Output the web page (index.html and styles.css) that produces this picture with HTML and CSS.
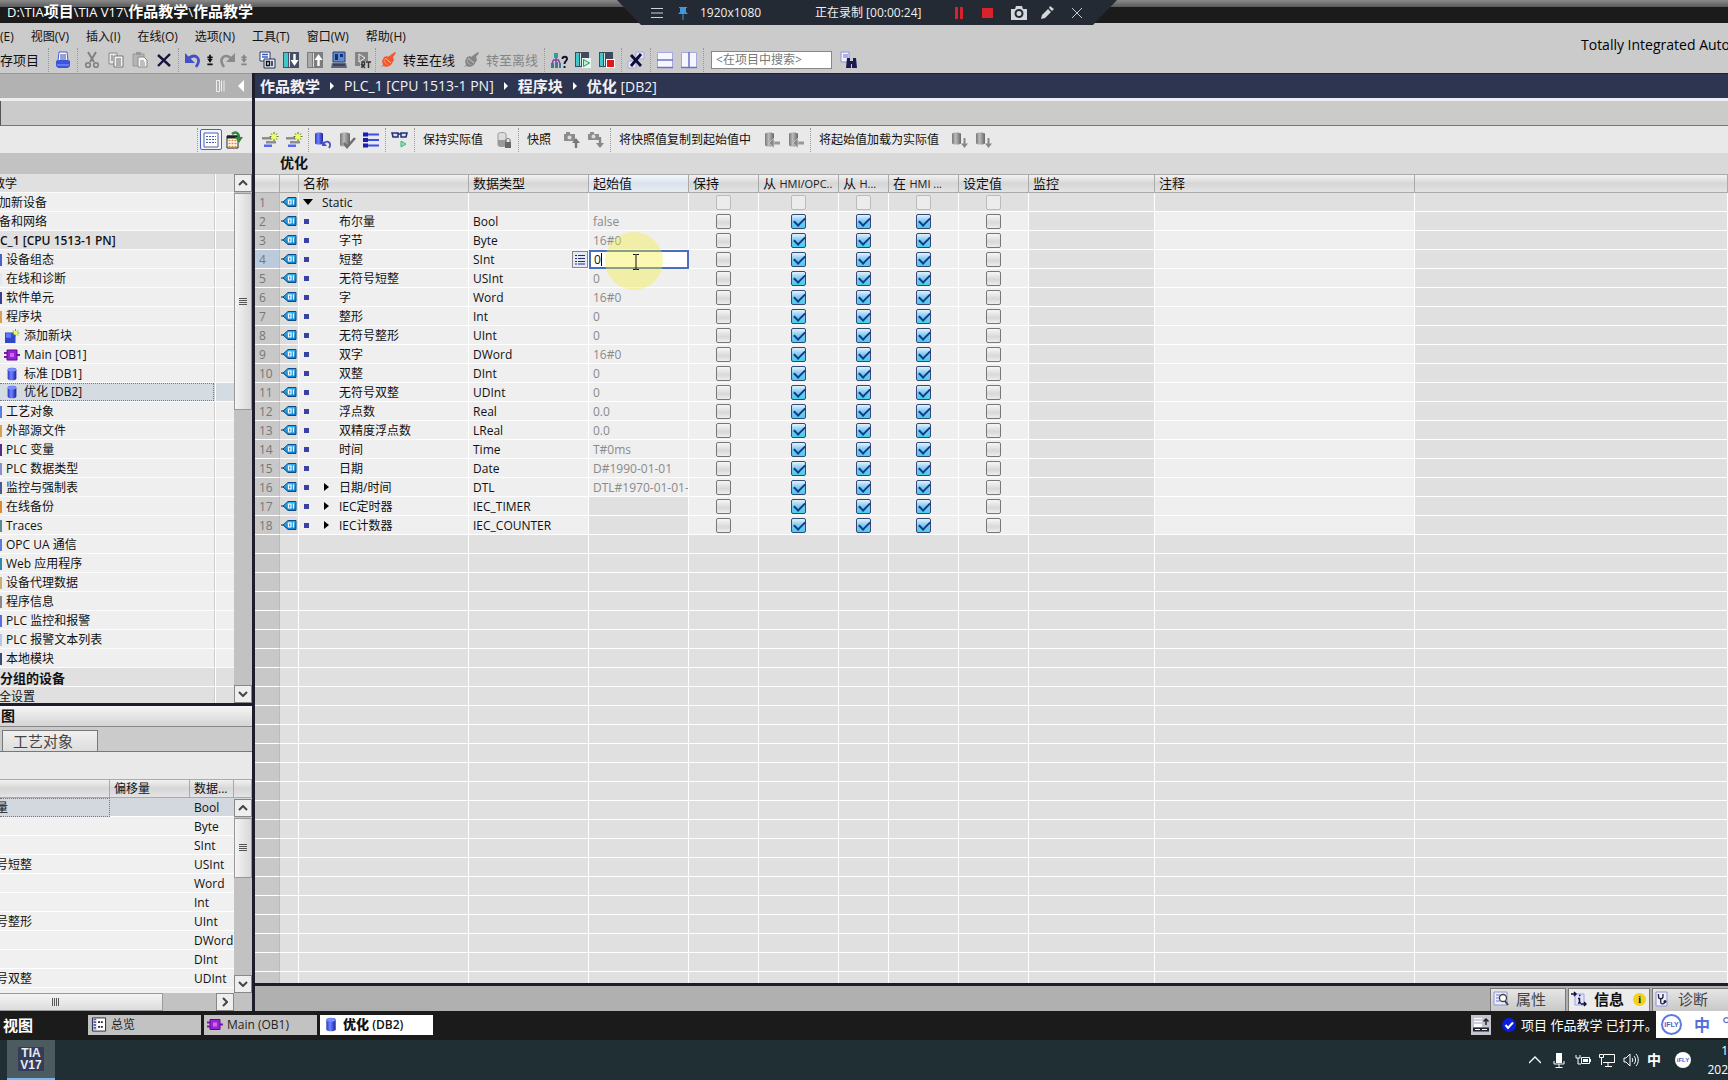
FILE: index.html
```
<!DOCTYPE html>
<html lang="zh-CN">
<head>
<meta charset="utf-8">
<title>TIA V17 - 作品教学</title>
<link rel="stylesheet" href="styles.css">
</head>
<body>
<svg class="sprite" aria-hidden="true">
  <defs>
    <linearGradient id="gBlue" x1="0" x2="1"><stop offset="0" stop-color="#2a35c8"/><stop offset=".4" stop-color="#6f86ff"/><stop offset="1" stop-color="#1a1f9a"/></linearGradient>
    <linearGradient id="gGrey" x1="0" x2="1"><stop offset="0" stop-color="#777"/><stop offset=".4" stop-color="#bbb"/><stop offset="1" stop-color="#666"/></linearGradient>
    <linearGradient id="gTag" x1="0" x2="0" y1="0" y2="1"><stop offset="0" stop-color="#35b4ee"/><stop offset="1" stop-color="#0a7fd0"/></linearGradient>
  </defs>
  <symbol id="print" viewBox="0 0 18 18"><path d="M5 1h8l1 9H4z" fill="#fff" stroke="#4a5ad0"/><path d="M6 4h6M6 6h6M6 8h6" stroke="#33409c"/><path d="M2 10l2-1h10l2 1v5l-2 2H4l-2-2z" fill="#3c55dd"/><path d="M3 14h12" stroke="#8fa4ff"/></symbol>
  <symbol id="cut" viewBox="0 0 18 18"><path d="M5 1l6 10M13 1L7 11" stroke="#808080" stroke-width="2" fill="none"/><circle cx="5" cy="14" r="2.3" fill="none" stroke="#808080" stroke-width="1.6"/><circle cx="13" cy="14" r="2.3" fill="none" stroke="#808080" stroke-width="1.6"/></symbol>
  <symbol id="copy" viewBox="0 0 18 18"><path d="M2 2h8v11H2z" fill="#e8e8e8" stroke="#888"/><path d="M7 5h9v11H7z" fill="#f4f4f4" stroke="#777"/><path d="M4 5h2M4 7h2M4 9h2M9 8h5M9 10h5M9 12h5M9 14h5" stroke="#666"/></symbol>
  <symbol id="paste" viewBox="0 0 18 18"><path d="M2 3h11v12H2z" fill="#b5b5b5" stroke="#999"/><path d="M5 1h5v3H5z" fill="#999"/><path d="M7 6h6l3 3v7H7z" fill="#f4f4f4" stroke="#888"/><path d="M9 10h4M9 12h5M9 14h5" stroke="#888"/></symbol>
  <symbol id="del" viewBox="0 0 18 18"><path d="M3 4l12 11M15 3L3 15" stroke="#14143c" stroke-width="2.4" fill="none"/></symbol>
  <symbol id="undo" viewBox="0 0 18 18"><path d="M5 7c7-5 13 1 7 9" stroke="#4450c8" stroke-width="2.8" fill="none"/><path d="M1 2v10h10z" fill="#4450c8"/></symbol>
  <symbol id="redo" viewBox="0 0 18 18"><path d="M13 7C6 2 0 8 6 16" stroke="#8a8a8a" stroke-width="2.6" fill="none"/><path d="M17 2v9H8z" fill="#8a8a8a"/></symbol>
  <symbol id="pm" viewBox="0 0 8 18"><path d="M1 6h6M4 3v8M1 14h6" stroke="currentColor" stroke-width="2"/><path d="M1 8h6l-3 4z" fill="currentColor"/></symbol>
  <symbol id="compile" viewBox="0 0 18 18"><path d="M2 1h10v9H2z" fill="#fff" stroke="#2a3a70"/><path d="M4 3.500h6M4 6h6" stroke="#3b56c8" stroke-width="1.500"/><path d="M6 8h11v9H6z" fill="#dfe6f5" stroke="#26305e"/><path d="M8.500 10.500h3v4h-3zM14 10v5" stroke="#111" fill="none" stroke-width="1.400"/></symbol>
  <symbol id="down" viewBox="0 0 18 18"><path d="M1 1h16v16H1z" fill="#455065"/><path d="M2 2h4v14H2z" fill="#3fc7c9"/><path d="M7 2h1v14H7z" fill="#ddd"/><path d="M12.500 3v8" stroke="#fff" stroke-width="2.400"/><path d="M8.500 9h8l-4 6z" fill="#fff"/></symbol>
  <symbol id="up" viewBox="0 0 18 18"><path d="M1 1h16v16H1z" fill="#7c7c7c"/><path d="M2 2h4v14H2z" fill="#aaa"/><path d="M7 2h1v14H7z" fill="#ddd"/><path d="M12.500 8v7" stroke="#fff" stroke-width="2.400"/><path d="M8.500 9h8l-4-6z" fill="#fff"/></symbol>
  <symbol id="sim" viewBox="0 0 18 18"><path d="M3 1h12v10H3z" fill="#5a8fd8" stroke="#2c3a6a"/><path d="M5 3h3v6H5zM10 3h3v3h-3z" fill="#1d2c70"/><path d="M2 12h14l1 5H1z" fill="#5b6480"/><path d="M3 14h12" stroke="#222"/></symbol>
  <symbol id="rt" viewBox="0 0 18 18"><path d="M1 1h13v14H1z" fill="#858585"/><path d="M5 3v8l6-4z" fill="none" stroke="#eee"/><path d="M6 10h12v8H6z" fill="#c4c4c4"/><path d="M8 17v-6h2.500v3H8l3 3M12 11h5M14.500 11v6" stroke="#333" stroke-width="1.400" fill="none"/></symbol>
  <symbol id="plug" viewBox="0 0 18 18"><path d="M1 17l3-3-1-4 2-4 3-1 1 1 4-3 3-2 1 1-3 4 1 3-3 5-4 2-4-1z" fill="currentColor"/><path d="M6 7l6 5" stroke="#fff" stroke-opacity=".6"/><path d="M5 8l1 4 3 2" stroke="#fff" stroke-opacity=".3" fill="none"/></symbol>
  <symbol id="net" viewBox="0 0 18 18"><path d="M4 2h4v5H4z" fill="#2e9f9a"/><path d="M6 7v4M1.500 14l2-5h5l2 5" stroke="#8b3fa0" stroke-width="1.500" fill="none"/><path d="M1 12h3v5H1zM5 11h3v6H5zM9 12h2v5H9z" fill="#3a7a9a"/><path d="M12.500 8c0-3 4.500-3 4.500 0 0 2-2.500 2-2.500 5M14.500 15v2" stroke="#101030" stroke-width="1.900" fill="none"/></symbol>
  <symbol id="start" viewBox="0 0 18 18"><path d="M1 1h14v15H1z" fill="#3d4a60"/><path d="M2 2h3v13H2z" fill="#3fc7c9"/><path d="M6 2h1v13H6z" fill="#ddd"/><path d="M8 7h9v10H8z" fill="#e8f7ef"/><path d="M9.500 8.500v7l6-3.500z" fill="#bff0d4" stroke="#1f9a60"/></symbol>
  <symbol id="stop" viewBox="0 0 18 18"><path d="M1 1h14v15H1z" fill="#3d4a60"/><path d="M2 2h3v13H2z" fill="#3fc7c9"/><path d="M6 2h1v13H6z" fill="#ddd"/><path d="M8 8h9v9H8z" fill="#fff"/><path d="M9 9h7v7H9z" fill="#e01818"/></symbol>
  <symbol id="xref" viewBox="0 0 18 18"><path d="M9 1h8v7H9zM1 10h8v7H1z" fill="#e6e6ff" stroke="#a9a9dd"/><path d="M4 4l10 11M14 3L4 15" stroke="#0c0c38" stroke-width="2.800" fill="none"/></symbol>
  <symbol id="splitH" viewBox="0 0 18 18"><path d="M1.500 1.500h15v15h-15z" fill="#f6f6ff" stroke="#a4a8e0"/><path d="M1 9h16M1 16.500h16" stroke="#6b72c4" stroke-width="1.500"/></symbol>
  <symbol id="splitV" viewBox="0 0 18 18"><path d="M1.500 1.500h15v15h-15z" fill="#f6f6ff" stroke="#a4a8e0"/><path d="M9 1v16M1 16.500h16" stroke="#6b72c4" stroke-width="1.500"/></symbol>
  <symbol id="find" viewBox="0 0 18 18"><path d="M1 1h8v10H1z" fill="#f0f0ff" stroke="#8f93d8"/><path d="M3 4h5M3 6h5" stroke="#6b72c4"/><path d="M7 7h3v3h3V7h3l1 10h-5v-4h-1v4H6z" fill="#1b1b50"/></symbol>
  <symbol id="addrow" viewBox="0 0 18 18"><path d="M1 6h9v2.500H1zM5 10h10v2.500H5z" fill="#8d8d8d"/><path d="M3 13.500h8V16H3z" fill="#5a67f0"/><path d="M13 1v9M8.500 5.500h9M10 2.500l6 6M16 2.500l-6 6" stroke="#4c7a20"/><circle cx="13" cy="5.500" r="2.600" fill="#f4ff5a"/></symbol>
  <symbol id="dbundo" viewBox="0 0 18 18"><path d="M1 3c0-2 8-2 8 0v9c0 2-8 2-8 0z" fill="url(#gBlue)"/><path d="M10 12c4-3 8 0 5 5" stroke="#4450c8" stroke-width="1.800" fill="none"/><path d="M8 9v6h5z" fill="#4450c8"/></symbol>
  <symbol id="dbcheck" viewBox="0 0 18 18"><path d="M2 3c0-2 10-2 10 0v11c0 2-10 2-10 0z" fill="url(#gGrey)"/><path d="M6 12l3 4 8-9" stroke="#707070" stroke-width="2.600" fill="none"/></symbol>
  <symbol id="lines" viewBox="0 0 18 18"><path d="M1 3.500h5M1 9h5M1 14.500h5" stroke="#1c1cb0" stroke-width="4"/><path d="M6 3.500h11M6 9h11M6 14.500h11" stroke="#3a50e8" stroke-width="2"/></symbol>
  <symbol id="glasses" viewBox="0 0 18 18"><path d="M1 2h6v4H2zM10 2h6l-1 4h-5zM7 3h3" fill="#cfe4ff" stroke="#27306e" stroke-width="1.500"/><path d="M10 10v6l5-3z" fill="#8fe0b8" stroke="#39b87a"/></symbol>
  <symbol id="dblock" viewBox="0 0 18 18"><path d="M3 3c0-2 8-2 8 0v11c0 2-8 2-8 0z" fill="#ddd" stroke="#999"/><path d="M3 9h8v5c0 2-8 2-8 0z" fill="#999"/><path d="M10 11h6v6h-6z" fill="#666"/><path d="M11 11V9c0-2 4-2 4 0v2" fill="none" stroke="#666"/></symbol>
  <symbol id="camup" viewBox="0 0 18 18"><path d="M1 3h2V1h4v2h5v7H1z" fill="#8c8c8c"/><circle cx="6.500" cy="6.500" r="2" fill="#ddd"/><path d="M13 10v7" stroke="#777" stroke-width="2.400"/><path d="M9 12l4-5 4 5z" fill="#777"/></symbol>
  <symbol id="camdown" viewBox="0 0 18 18"><path d="M1 3h2V1h4v2h5v6H1z" fill="#8c8c8c"/><circle cx="6.500" cy="5.500" r="2" fill="#ddd"/><path d="M13 6v8" stroke="#888" stroke-width="2.400"/><path d="M9 12l4 5 4-5z" fill="#888"/></symbol>
  <symbol id="dbleft" viewBox="0 0 18 18"><path d="M2 3c0-2 9-2 9 0v11c0 2-9 2-9 0z" fill="url(#gGrey)"/><path d="M10 12h7" stroke="#999" stroke-width="3"/><path d="M6 12l5-5v10z" fill="#888" stroke="#ddd" stroke-width=".6"/></symbol>
  <symbol id="dbdown" viewBox="0 0 18 18"><path d="M1 3c0-2 9-2 9 0v9c0 2-9 2-9 0z" fill="url(#gGrey)"/><path d="M13.500 7v8" stroke="#888" stroke-width="2"/><path d="M10 12.500l3.500 4.500 3.500-4.500z" fill="#888"/></symbol>
  <symbol id="tag" viewBox="0 0 16 12"><path d="M0 6h3" stroke="#222"/><path d="M2 6l5-4.500h8v9H7z" fill="url(#gTag)" stroke="#0b4a86"/><path d="M7.500 4h2.500v4H7.500zM12.500 3.500v5" fill="none" stroke="#fff" stroke-width="1.200"/></symbol>
  <symbol id="db" viewBox="0 0 12 16"><path d="M1 3c0-3 10-3 10 0v10c0 3-10 3-10 0z" fill="url(#gBlue)"/><ellipse cx="6" cy="3" rx="5" ry="2" fill="#7c8fff"/></symbol>
  <symbol id="ob" viewBox="0 0 16 12"><path d="M0 4h4M0 8h4M12 6h4" stroke="#7a18a8" stroke-width="2"/><path d="M3 1h10v10H3z" fill="#9a22d6" stroke="#5c0d86"/><path d="M6 4h4v4H6z" fill="#c86bf2"/></symbol>
  <symbol id="newblk" viewBox="0 0 16 16"><path d="M0 4h12v12H0z" fill="#2f45cf"/><path d="M1 5h6v5H1z" fill="#5f7aff"/><path d="M12 0v9M7.500 4.500h9M9 1.500l6 6M15 1.500l-6 6" stroke="#6b9a20"/><circle cx="12" cy="4.500" r="2.200" fill="#f0ff50"/></symbol>
  <symbol id="grid" viewBox="0 0 16 16"><path d="M1 1h14v14H1z" fill="#fff" stroke="#5060a8"/><path d="M3 4.500h10M3 7.500h10M3 10.500h10" stroke="#4a5ab8" stroke-dasharray="2 1"/></symbol>
  <symbol id="gridgo" viewBox="0 0 18 18"><path d="M2 5h11v12H2z" fill="#fff" stroke="#222"/><path d="M2 6h11" stroke="#222" stroke-width="3"/><path d="M3.500 9.500h8M3.500 12.500h8M3.500 15.500h8" stroke="#e08a20" stroke-width="1.600" stroke-dasharray="2 1"/><path d="M7 3c4-3 7-1 7 4" fill="none" stroke="#2c8a3c" stroke-width="2.500"/><path d="M10 6h8l-4 6z" fill="#2c8a3c"/></symbol>
  <symbol id="over" viewBox="0 0 16 16"><path d="M1 1h14v14H1z" fill="#fff" stroke="#223"/><path d="M2 2h3v12H2z" fill="#4a5ab8"/><path d="M2 4h3M2 7h3M2 10h3M2 13h3" stroke="#fff"/><path d="M7 5.500h6M7 10.500h6" stroke="#222" stroke-width="2" stroke-dasharray="2 1"/></symbol>
  <symbol id="props" viewBox="0 0 16 16"><path d="M1 1h13v13H1z" fill="#eef" stroke="#8f93d8"/><path d="M3 4h4M3 7h3M3 10h4" stroke="#6b72c4"/><circle cx="10" cy="7" r="3.500" fill="#fff" stroke="#444" stroke-width="1.300"/><path d="M12 10l3 4" stroke="#444" stroke-width="2"/></symbol>
  <symbol id="info" viewBox="0 0 16 16"><path d="M4 3h9v11H4z" fill="#dfe4ff" stroke="#9ba2e0"/><path d="M0 3h5M3 1l2 2-2 2M10 13h5M13 11l2 2-2 2M8.500 7v5M7 12h3M7 7.500h2M8 4.500h1.500" fill="none" stroke="#14143c" stroke-width="1.500"/></symbol>
  <symbol id="diag" viewBox="0 0 16 16"><path d="M1 1h11v14H1z" fill="#eef" stroke="#8f93d8"/><path d="M3.500 3v2.500c0 3 4.500 3 4.500 0V3M5.700 8v3c0 3 4 2 4 0" fill="none" stroke="#223" stroke-width="1.300"/><circle cx="10" cy="10.500" r="1.500" fill="#223"/></symbol>
</svg>

<div class="app">
  <header class="titlebar">
    <h1 class="title">D:\TIA<b>项目</b>\TIA V17\<b>作品教学</b>\<b>作品教学</b></h1>
    <div class="recorder">
      <svg class="r-menu" viewBox="0 0 12 12"><path d="M0 1.500h12M0 6h12M0 10.500h12" stroke="#d0d3d6"/></svg>
      <svg class="r-pin" viewBox="0 0 12 14"><path d="M2 1h8v1H9v4l2 2H1l2-2V2H2zM5.500 8h1v6h-1z" fill="#3f97dc"/></svg>
      <span class="r-size">1920x1080</span>
      <span class="r-time">正在录制 [00:00:24]</span>
      <svg class="r-pause" viewBox="0 0 12 12"><path d="M2 0h3v12H2zM7 0h3v12H7z" fill="#d8232e"/></svg>
      <svg class="r-stop" viewBox="0 0 12 12"><path d="M1 1h11v10H1z" fill="#d8232e"/></svg>
      <svg class="r-cam" viewBox="0 0 16 14"><path d="M0 3h4l1-3h6l1 3h4v11H0z" fill="#d5d8da"/><circle cx="8" cy="7.500" r="3.500" fill="#d5d8da" stroke="#242a33" stroke-width="2"/></svg>
      <svg class="r-pen" viewBox="0 0 14 14"><path d="M1 13l1-4 6-6 3 3-6 6zM9 2l1-2 4 3-2 2z" fill="#d5d8da"/></svg>
      <svg class="r-close" viewBox="0 0 10 10"><path d="M0 0l10 10M10 0L0 10" stroke="#c6c9cc"/></svg>
    </div>
  </header>

  <div class="top">
    <div class="top-left">
      <nav class="menu">
        <a href="#">(E)</a><a href="#">视图(V)</a><a href="#">插入(I)</a><a href="#">在线(O)</a><a href="#">选项(N)</a><a href="#">工具(T)</a><a href="#">窗口(W)</a><a href="#">帮助(H)</a>
      </nav>
      <div class="bar">
        <button class="txt save">存项目</button><i class="sep"></i>
        <button class="ic"><svg><use href="#print"/></svg></button><i class="sep"></i>
        <button class="ic"><svg><use href="#cut"/></svg></button><button class="ic"><svg><use href="#copy"/></svg></button><button class="ic"><svg><use href="#paste"/></svg></button><button class="ic"><svg><use href="#del"/></svg></button><i class="sep"></i>
        <button class="ic"><svg><use href="#undo"/></svg></button><button class="ic slim"><svg><use href="#pm"/></svg></button>
        <button class="ic"><svg><use href="#redo"/></svg></button><button class="ic slim dim"><svg><use href="#pm"/></svg></button><i class="sep blank"></i>
        <button class="ic"><svg><use href="#compile"/></svg></button><button class="ic"><svg><use href="#down"/></svg></button><button class="ic"><svg><use href="#up"/></svg></button><button class="ic"><svg><use href="#sim"/></svg></button><button class="ic"><svg><use href="#rt"/></svg></button><i class="sep tight"></i>
        <button class="ic orange"><svg><use href="#plug"/></svg></button><button class="txt">转至在线</button>
        <button class="ic dim"><svg><use href="#plug"/></svg></button><button class="txt dim">转至离线</button><i class="sep"></i>
        <button class="ic"><svg><use href="#net"/></svg></button><button class="ic"><svg><use href="#start"/></svg></button><button class="ic"><svg><use href="#stop"/></svg></button><i class="sep"></i>
        <button class="ic"><svg><use href="#xref"/></svg></button><i class="sep"></i>
        <button class="ic"><svg><use href="#splitH"/></svg></button><button class="ic"><svg><use href="#splitV"/></svg></button><i class="sep"></i>
        <input class="search" type="text" placeholder="&lt;在项目中搜索&gt;" aria-label="在项目中搜索">
        <button class="ic"><svg><use href="#find"/></svg></button>
      </div>
    </div>
    <p class="brand">Totally Integrated Auto</p>
  </div>

  <div class="main">
    <aside class="side">
      <div class="side-head">
        <svg viewBox="0 0 10 12" class="h-cols"><path d="M.5.500h3v11h-3zM5.500.500v11M8 .5v11" fill="none" stroke="#eee"/></svg>
        <svg viewBox="0 0 6 12" class="h-arrow"><path d="M6 0v12L0 6z" fill="#fff"/></svg>
      </div>
      <div class="side-tabs"></div>
      <div class="side-tools">
        <i class="sep"></i>
        <button class="ic on"><svg><use href="#grid"/></svg></button>
        <button class="ic"><svg><use href="#gridgo"/></svg></button>
      </div>
      <div class="side-title"></div>
      <div class="scroller tree-area">
        <ul class="tree" id="tree"></ul>
        <div class="vbar">
          <button class="sb" aria-label="上"><svg viewBox="0 0 10 6"><path d="M1 5l4-4 4 4"/></svg></button>
          <div class="thumb tall"><svg viewBox="0 0 8 8"><path d="M0 .5h8M0 2.500h8M0 4.500h8M0 6.500h8"/></svg></div>
          <div class="track"></div>
          <button class="sb" aria-label="下"><svg viewBox="0 0 10 6"><path d="M1 1l4 4 4-4"/></svg></button>
        </div>
      </div>
      <div class="detail-head">图</div>
      <div class="detail-tabs"><button>工艺对象</button></div>
      <div class="detail-gap"></div>
      <div class="scroller detail-area">
        <table class="detail">
          <colgroup><col class="d1"><col class="d2"><col class="d3"><col class="d4"></colgroup>
          <thead><tr><th></th><th>偏移量</th><th>数据...</th><th></th></tr></thead>
          <tbody id="detail"></tbody>
        </table>
        <div class="vbar over">
          <button class="sb" aria-label="上"><svg viewBox="0 0 10 6"><path d="M1 5l4-4 4 4"/></svg></button>
          <div class="thumb"><svg viewBox="0 0 8 8"><path d="M0 .5h8M0 2.500h8M0 4.500h8M0 6.500h8"/></svg></div>
          <div class="track"></div>
          <button class="sb" aria-label="下"><svg viewBox="0 0 10 6"><path d="M1 1l4 4 4-4"/></svg></button>
        </div>
      </div>
      <div class="hbar">
        <div class="thumb"><svg viewBox="0 0 8 8"><path d="M.5 0v8M2.500 0v8M4.500 0v8M6.500 0v8"/></svg></div>
        <div class="track"></div>
        <button class="sb" aria-label="右"><svg viewBox="0 0 6 10"><path d="M1 1l4 4-4 4"/></svg></button>
      </div>
    </aside>

    <section class="editor">
      <div class="crumbs"><b>作品教学</b><i></i><span>PLC_1 [CPU 1513-1 PN]</span><i></i><b>程序块</b><i></i><span><b>优化</b> [DB2]</span></div>
      <div class="strip"></div>
      <div class="bar dbbar">
        <button class="ic"><svg><use href="#addrow"/></svg></button><button class="ic"><svg><use href="#addrow"/></svg></button><i class="sep"></i>
        <button class="ic"><svg><use href="#dbundo"/></svg></button><button class="ic"><svg><use href="#dbcheck"/></svg></button><button class="ic"><svg><use href="#lines"/></svg></button><i class="sep"></i>
        <button class="ic"><svg><use href="#glasses"/></svg></button><i class="sep"></i>
        <button class="txt">保持实际值</button><button class="ic"><svg><use href="#dblock"/></svg></button><i class="sep"></i>
        <button class="txt">快照</button><button class="ic"><svg><use href="#camup"/></svg></button><button class="ic"><svg><use href="#camdown"/></svg></button><i class="sep"></i>
        <button class="txt">将快照值复制到起始值中</button><button class="ic"><svg><use href="#dbleft"/></svg></button><button class="ic"><svg><use href="#dbleft"/></svg></button><i class="sep"></i>
        <button class="txt">将起始值加载为实际值</button><button class="ic"><svg><use href="#dbdown"/></svg></button><button class="ic"><svg><use href="#dbdown"/></svg></button>
      </div>
      <h2 class="dbname">优化</h2>
      <div class="gridwrap">
        <table class="grid">
          <colgroup><col class="c-num"><col class="c-icon"><col class="c-name"><col class="c-type"><col class="c-start"><col class="c-70"><col class="c-80"><col class="c-50"><col class="c-70"><col class="c-70"><col class="c-mon"><col class="c-note"><col></colgroup>
          <thead><tr><th></th><th></th><th>名称</th><th>数据类型</th><th class="hot">起始值</th><th>保持</th><th>从 <small>HMI/OPC..</small></th><th>从 <small>H...</small></th><th>在 <small>HMI ...</small></th><th>设定值</th><th>监控</th><th>注释</th><th></th></tr></thead>
          <tbody id="grid-body"></tbody>
        </table>
      </div>
      <div class="inspector">
        <button class="itab"><svg><use href="#props"/></svg>属性</button>
        <button class="itab active"><svg><use href="#info"/></svg>信息<em>i</em></button>
        <button class="itab last"><svg><use href="#diag"/></svg>诊断</button>
      </div>
    </section>
  </div>

  <footer class="status">
    <b class="portal">视图</b>
    <button class="win"><svg><use href="#over"/></svg>总览</button>
    <button class="win"><svg><use href="#ob"/></svg>Main (OB1)</button>
    <button class="win sel"><svg><use href="#db"/></svg><span><b>优化</b> (DB2)</span></button>
    <div class="msg">
      <svg class="msg-box" viewBox="0 0 20 20"><path d="M0 0h20v20H0z" fill="#c4c4cc"/><path d="M3 3h8v9H3z" fill="#fff"/><path d="M3 5h8M3 8h8" stroke="#99a"/><path d="M2 12.500h16v4H2z" fill="#223"/><path d="M4 14.500h5M11 14.500h5" stroke="#fff"/><path d="M15 10V5M12.500 6.500L15 4l2.500 2.500" fill="none" stroke="#223" stroke-width="1.500"/></svg>
      <svg class="msg-ok" viewBox="0 0 14 14"><circle cx="7" cy="7" r="7" fill="#0a1ee0"/><path d="M3.500 7l2.500 3 5-5.500" fill="none" stroke="#fff" stroke-width="2"/></svg>
      <span>项目 作品教学 已打开。</span>
    </div>
    <div class="ime"><span class="ifly">iFLY</span><b>中</b><span class="deg">°</span></div>
  </footer>

  <div class="taskbar">
    <button class="tia"><span>TIA<br>V17</span></button>
    <div class="tray">
      <svg class="t-up" viewBox="0 0 12 12"><path d="M0 9l6-6 6 6" fill="none" stroke="#fff" stroke-width="1.300"/></svg>
      <svg viewBox="0 0 16 16"><path d="M5 1h6v10H5z" fill="#fff"/><path d="M3 9v3h10V9M8 12v3M4.500 15.500h7" fill="none" stroke="#fff"/></svg>
      <svg viewBox="0 0 16 16"><path d="M1 3v3h4V3M3 6v6h3M6.500 5.500h8v6h-8zM15.500 7v3" fill="none" stroke="#fff"/><path d="M8 7h5v3H8z" fill="#fff"/></svg>
      <svg viewBox="0 0 16 16"><path d="M5 2.500h10.500v8H4M9 11v3M6 14.500h7M.5 2.500h4v3h-4zM2.500 6v7" fill="none" stroke="#fff"/></svg>
      <svg viewBox="0 0 16 16"><path d="M1 6h2l4-4v12l-4-4H1zM9 6c1 1 1 3 0 4M11 4c2 2 2 6 0 8M13 2c3 3 3 9 0 12" fill="none" stroke="#fff"/></svg>
      <b>中</b>
      <span class="ifly white">iFLY</span>
      <time>1<br>202</time>
    </div>
  </div>
</div>
<script src="app.js"></script>
</body>
</html>
```
FILE: styles.css
```
* { box-sizing: border-box; }
body { margin: 0; font: 12px/18px "Open Sans", "Noto Sans", "Noto Sans CJK SC", sans-serif; color: #111; background: #cbcbcb; overflow: hidden; }
button, input { font: inherit; color: inherit; margin: 0; padding: 0; border: 0; background: none; border-radius: 0; }
a { color: inherit; text-decoration: none; }
ul, h1, h2, p { margin: 0; padding: 0; list-style: none; font-weight: 400; }
svg { display: block; flex: none; }
.sprite { position: absolute; width: 0; height: 0; }
.app { display: flex; flex-direction: column; height: 100vh; }

/* title bar */
.titlebar { flex: none; height: 23px; background: linear-gradient(#8a8a8a, #5a5a5a 7px, #1b1b1b 7px); }
.title { padding-left: 7px; color: #fff; font-size: 13px; line-height: 23px; white-space: nowrap; }
.title b { font-size: 15px; }
.recorder { position: absolute; top: 0; left: 617px; width: 500px; height: 25px; display: flex; align-items: center; padding-left: 34px; background: #242a33; color: #f0f0f0; font-size: 12px; clip-path: polygon(0 0, 100% 0, 476px 100%, 24px 100%); }
.r-menu { width: 12px; height: 12px; margin-right: 14px; }
.r-pin { width: 12px; height: 14px; margin-right: 11px; }
.r-size { width: 115px; }
.r-time { width: 138px; font-size: 12px; }
.r-pause { width: 12px; height: 12px; margin-right: 16px; }
.r-stop { width: 12px; height: 12px; margin-right: 18px; }
.r-cam { width: 16px; height: 14px; margin-right: 13px; }
.r-pen { width: 14px; height: 14px; margin-right: 18px; }
.r-close { width: 10px; height: 10px; }

/* menu and main toolbar */
.top { flex: none; display: flex; justify-content: space-between; height: 50px; overflow: hidden; }
.menu { display: flex; gap: 17px; height: 24px; padding-top: 5px; white-space: nowrap; }
.bar { display: flex; align-items: center; height: 26px; white-space: nowrap; }
.brand { font-size: 14px; font-weight: 500; color: #000; line-height: 20px; padding-top: 12px; white-space: nowrap; width: 147px; }
.sep { width: 1px; height: 24px; margin: 0 2px; border-left: 1px dotted #999; flex: none; }
.sep.blank { border-color: transparent; margin: 0 4px 0 1px; }
.sep.tight { margin: 0; }
.ic { width: 24px; height: 24px; display: flex; align-items: center; justify-content: center; flex: none; }
.ic svg { width: 18px; height: 18px; }
.ic.slim { width: 10px; }
.ic.slim svg { width: 8px; height: 16px; }
.ic.orange { color: #f0582a; }
.dim { color: #858585; }
.txt { font-size: 13px; padding: 0 4px 0 3px; }
.save { width: 46px; padding: 0; text-align: left; }
.search { width: 121px; height: 18px; margin: 0 5px; padding: 0 4px; background: #fff; border: 1px solid #888; }
.search::placeholder { color: #777; opacity: 1; }

/* layout */
.main { flex: 1; min-height: 0; display: flex; }
.side { width: 255px; flex: none; border-right: 3px solid #1d1d2b; display: flex; flex-direction: column; }
.editor { flex: 1; min-width: 0; display: flex; flex-direction: column; }

/* left side */
.side-head { height: 28px; flex: none; background: #b2b2b2; border-bottom: 3px solid #eee; border-top: 1px solid #999; display: flex; justify-content: flex-end; align-items: center; gap: 12px; padding-right: 8px; }
.h-cols { width: 10px; height: 12px; }
.h-arrow { width: 6px; height: 12px; }
.side-tabs { height: 25px; flex: none; border-bottom: 1px solid #777; border-left: 1px solid #555; background: #cbcbcb; }
.side-tools { height: 27px; flex: none; background: #e9e9e9; display: flex; align-items: center; justify-content: flex-end; padding-right: 6px; }
.side-tools .ic.on { width: 22px; height: 21px; border: 1px solid #4a62b8; border-radius: 2px; background: #f4f6ff; }
.side-tools .on svg { width: 16px; height: 16px; }
.side-title { height: 21px; flex: none; background: #c2c2c2; }
.scroller { display: flex; min-height: 0; overflow: hidden; }
.tree-area { height: 529px; flex: none; }
.tree { flex: 1; overflow: hidden; background: #efefef; }
.tree li { display: flex; height: 19px; line-height: 18px; border-bottom: 1px solid #fcfcfc; white-space: nowrap; }
.tree li::after { content: ""; width: 19px; border-left: 1px solid #ccc; box-shadow: inset 1px 0 #fff; }
.tree .label { flex: 1; display: flex; align-items: center; overflow: hidden; padding-top: 1px; }
.tree .shade { background: #e0e0e0; }
.tree .bold { font-weight: 600; }
.tree .heavy { font-weight: 700; font-size: 13px; }
.tree .sel { background: #d5dce1; }
.tree .sel .label { border: 1px dotted #777; border-left: 0; padding-top: 0; }
.tree .lvl0 .label { text-indent: -1px; }
.tree .root .label { text-indent: -7px; }
.tree .chip { width: 2px; height: 12px; margin-right: 4px; }
.tree svg { width: 16px; height: 14px; margin: 0 4px; }
.vbar { width: 18px; flex: none; background: #c2c2c2; display: flex; flex-direction: column; align-items: stretch; }
.sb { width: 18px; height: 18px; flex: none; background: #eee; border: 1px solid #888; display: flex; align-items: center; justify-content: center; }
.sb svg { width: 10px; height: 6px; fill: none; stroke: #444; stroke-width: 2; }
.thumb { height: 60px; margin-top: 1px; background: linear-gradient(90deg, #f4f4f4, #d8d8d8); border: 1px solid #999; display: flex; align-items: center; justify-content: center; }
.thumb.tall { height: 217px; }
.thumb svg { width: 8px; height: 8px; stroke: #555; }
.track { flex: 1; }
.detail-head { height: 24px; flex: none; border-top: 3px solid #1d1d2b; border-bottom: 1px solid #888; background: linear-gradient(#f6f6f6, #d4d4d4); font-size: 14px; font-weight: 700; line-height: 20px; padding-left: 1px; }
.detail-tabs { height: 25px; flex: none; border-bottom: 1px solid #777; padding: 3px 0 0 2px; }
.detail-tabs button { width: 96px; height: 21px; background: linear-gradient(#f0f0f0, #ddd); border: 1px solid #777; border-bottom: 0; font-size: 15px; line-height: 18px; color: #444; padding-right: 14px; }
.detail-gap { height: 27px; flex: none; background: #e9e9e9; }
.detail-area { flex: 1; position: relative; }
.detail { width: 252px; border-spacing: 0; table-layout: fixed; height: 0; }
.d1 { width: 110px; }
.d2 { width: 80px; }
.d3 { width: 44px; }
.detail td, .detail th, .grid td, .grid th { height: 19px; padding: 0; line-height: 17px; white-space: nowrap; text-align: left; overflow: hidden; }
.detail th, .grid th { font-weight: 400; font-size: 13px; padding-left: 4px; border-top: 1px solid #aaa; border-bottom: 1px solid #aaa; border-right: 1px solid #aaa; background: linear-gradient(#f2f2f2, #d6d6d6 50%, #e4e4e4); }
.detail th { font-size: 12px; }
.detail td { background: #f0f0f0; border-bottom: 1px solid #fff; }
.detail td:first-child { text-indent: -4px; }
.detail td:nth-child(3) { padding-left: 4px; overflow: visible; }
.detail tr.sel td { background: #d2d8dd; }
.detail tr.sel td:first-child { border: 1px dotted #777; border-left: 0; line-height: 15px; }
.vbar.over { position: absolute; right: 0; top: 20px; bottom: 0; }
.hbar { flex: none; height: 18px; display: flex; background: #c2c2c2; padding-right: 18px; }
.hbar .thumb { width: 163px; height: 18px; margin: 0; border-left: 0; background: linear-gradient(#f4f4f4, #dcdcdc); padding-right: 50px; }
.hbar .sb svg { width: 6px; height: 10px; }

/* editor */
.crumbs { height: 25px; flex: none; background: #2e3550; border-top: 1px solid #1f2330; color: #f2f2f6; display: flex; align-items: center; padding-left: 5px; font-size: 14px; font-weight: 500; white-space: nowrap; }
.crumbs b { font-size: 15px; }
.crumbs i { border: 4px solid transparent; border-left-color: #fff; border-right: 0; margin: 0 10px; }
.strip { height: 28px; flex: none; border-top: 3px solid #ececf4; border-bottom: 1px solid #777; background: #cbcbca; }
.dbbar { height: 27px; flex: none; background: #e9e9e9; padding-left: 3px; }
.dbbar .txt { font-size: 12px; padding: 0 9px 0 6px; }
.dbname { height: 21px; flex: none; background: #d9d9d9; font-size: 14px; font-weight: 700; line-height: 20px; padding-left: 25px; }
.gridwrap { flex: 1; min-height: 0; overflow: hidden; }
.grid { width: 100%; border-spacing: 0; table-layout: fixed; }
.c-num { width: 25px; }
.c-icon { width: 19px; }
.c-name { width: 170px; }
.c-type { width: 120px; }
.c-start { width: 100px; }
.c-50 { width: 50px; }
.c-70 { width: 70px; }
.c-80 { width: 80px; }
.c-mon { width: 126px; }
.c-note { width: 260px; }
.grid th small { font-size: 11px; color: #222; }
.grid th.hot { background: linear-gradient(#f4f8fc, #dbe2ec 50%, #e8eef4); }
.grid td { border-right: 1px solid #fff; border-bottom: 1px solid #fff; background: #efefef; padding-left: 4px; }
.grid td:first-child { background: #c8c8c8; color: #777; border-right-color: #bbb; }
.grid td:nth-child(2) { background: #dcdcdc; padding: 0; }
.grid td:nth-child(2) svg { width: 16px; height: 12px; margin-left: 1px; }
.grid td:nth-child(3) { padding-left: 2px; }
.grid .name { display: flex; align-items: center; }
.grid .dot { width: 5px; height: 5px; background: #3a40a8; margin: 0 6px 0 3px; }
.grid .tri { width: 24px; padding-left: 9px; }
.grid .tri svg { width: 6px; height: 8px; }
.grid .tri.down { width: 21px; padding-left: 2px; }
.grid .tri.down svg { width: 10px; height: 6px; }
.grid td:nth-child(5) { color: #8a8a8a; }
.grid td:nth-child(11), .grid td:last-child, .grid .empty td, .grid .head td, .grid td.off { background: #e0e0e0; }
.grid td.num, .grid .empty td:first-child { background: #c8c8c8; }
.grid .cur td:first-child { background: #bccbdc; }
.grid td.chk { padding: 0; }
.chk input { appearance: none; display: block; width: 15px; height: 15px; margin: 0 auto; border: 1px solid #777; border-radius: 2px; background: linear-gradient(#f6f6f6, #d8d8d8 60%, #ededed); }
.chk input:checked { border-color: #34477a; background: linear-gradient(#e2f2fa, #7cc8f0 50%, #45d0ea); }
.chk input:checked::after { content: ""; display: block; width: 9px; height: 5px; margin: 2px 0 0 2px; border: solid #123a86; border-width: 0 0 2px 2px; transform: rotate(-45deg); }
.chk input:disabled { border-color: #bbb; background: #ececec; }
.grid td.edit { overflow: visible; position: relative; padding: 0; }
.edit input { display: block; width: 100px; height: 19px; margin-bottom: -1px; border: 2px solid #4a6fc0; background: #fff; color: #111; padding: 0 3px; line-height: 15px; }
.edit .pick { position: absolute; left: -17px; top: 1px; width: 16px; height: 17px; background: #e6e8f6; border: 1px solid #888; display: flex; align-items: center; justify-content: center; }
.edit .pick svg { width: 10px; height: 11px; }
.edit .glow { position: absolute; left: 16px; top: -18px; width: 58px; height: 58px; border-radius: 50%; background: #f5f032; opacity: .38; }
.edit .beam { position: absolute; left: 43px; top: 4px; width: 8px; height: 16px; }
.edit .caret { position: absolute; left: 12px; top: 3px; width: 1px; height: 13px; background: #000; }

/* inspector tabs */
.inspector { height: 28px; flex: none; border-top: 3px solid #1d1d2b; background: #b0b0b0; display: flex; justify-content: flex-end; align-items: flex-end; gap: 2px; overflow: hidden; }
.itab { width: 76px; height: 23px; background: linear-gradient(#e6e6e6, #c8c8c8); border: 1px solid #777; border-bottom: 0; display: flex; align-items: center; gap: 7px; padding: 0 0 2px 2px; font-size: 15px; color: #444; white-space: nowrap; flex: none; }
.itab svg { width: 16px; height: 16px; }
.itab.active { width: 82px; background: #ececec; font-weight: 700; color: #111; }
.itab em { width: 13px; height: 13px; border-radius: 50%; background: #f2d21c; font: 700 10px/13px "Liberation Serif", serif; margin-left: 2px; text-align: center; }
.itab.last { border-right: 0; }

/* window bar */
.status { height: 29px; flex: none; background: #1b1b1b; display: flex; align-items: center; gap: 3px; padding-left: 3px; padding-bottom: 2px; }
.portal { width: 82px; color: #fff; font-size: 15px; }
.win { width: 113px; height: 20px; background: #c2c2c2; display: flex; align-items: center; gap: 4px; padding-left: 3px; color: #222; font-size: 12px; }
.win svg { width: 16px; height: 15px; }
.win.sel { background: #fff; font-weight: 600; font-size: 12px; color: #111; }
.win.sel b { font-size: 13px; }
.msg { margin-left: auto; display: flex; align-items: center; height: 27px; color: #fff; font-size: 13px; white-space: nowrap; }
.msg-box { width: 20px; height: 20px; margin-right: 11px; }
.msg-ok { width: 14px; height: 14px; margin-right: 5px; }
.msg span { width: 132px; }
.ime { width: 72px; height: 27px; background: #fff; display: flex; align-items: center; gap: 12px; padding-left: 5px; color: #5570d8; overflow: hidden; }
.ime b { font-size: 16px; }
.ime .deg { font-size: 20px; }
.ifly { width: 21px; height: 21px; flex: none; border: 2px solid #5b7be0; border-radius: 50%; font: 700 7px/17px "Liberation Sans", sans-serif; color: #4a62c8; text-align: center; }
.ifly.white { width: 16px; height: 16px; border: 0; background: #fff; font-size: 6px; line-height: 16px; }

/* task bar */
.taskbar { height: 40px; flex: none; background: #1f2f34; display: flex; justify-content: space-between; padding-left: 7px; }
.tia { width: 48px; height: 40px; background: #4b5b60; border-bottom: 2px solid #76b9ed; color: #e8ecf4; font: 700 12px/12px "Liberation Sans", sans-serif; display: flex; align-items: center; justify-content: center; }
.tia span { width: 26px; background: #343c58; }
.tray { display: flex; align-items: center; gap: 8px; color: #fff; overflow: hidden; width: 199px; }
.tray svg { width: 16px; height: 16px; }
.tray .t-up { width: 12px; height: 12px; margin-right: 2px; }
.tray b { font-size: 14px; width: 16px; }
.tray .ifly { margin-left: 5px; }
.tray time { font-size: 12px; line-height: 19px; text-align: right; margin-left: 8px; width: 21px; flex: none; }
```
FILE: app.js
```
const use = (id) => `<svg><use href="#${id}"/></svg>`;

const tree = [
  ["教学", "root shade"], ["加新设备", "lvl0"], ["备和网络", "lvl0"], ["C_1 [CPU 1513-1 PN]", "bold shade"],
  ["设备组态", "", "#4a62c8"], ["在线和诊断", "", "#dfe8f4"], ["软件单元", "", "#3a3f90"], ["程序块", "", "#d8a050"],
  ["添加新块", "", null, "newblk"], ["Main [OB1]", "", null, "ob"], ["标准 [DB1]", "", null, "db"], ["优化 [DB2]", "sel", null, "db"],
  ["工艺对象", "", "#5b7be0"], ["外部源文件", "", "#d8a050"], ["PLC 变量", "", "#5a2a80"], ["PLC 数据类型", "", "#8a8fd0"],
  ["监控与强制表", "", "#4a5a90"], ["在线备份", "", "#e08a30"], ["Traces", "", "#5a8a90"], ["OPC UA 通信", "", "#5b7be0"],
  ["Web 应用程序", "", "#2a8ab0"], ["设备代理数据", "", "#c8b070"], ["程序信息", "", "#888888"], ["PLC 监控和报警", "", "#5b6be0"],
  ["PLC 报警文本列表", "", "#b8c4e8"], ["本地模块", "", "#3a4a70"], ["分组的设备", "heavy shade"], ["全设置", "lvl0 shade"],
];
document.getElementById("tree").innerHTML = tree.map(([text, cls, chip, icon]) =>
  `<li class="${cls}"><span class="label">${chip ? `<i class="chip" style="background:${chip}"></i>` : ""}${icon ? use(icon) : ""}${text}</span></li>`).join("");

const detail = [["量", "Bool"], ["", "Byte"], ["", "SInt"], ["号短整", "USInt"], ["", "Word"], ["", "Int"], ["号整形", "UInt"], ["", "DWord"], ["", "DInt"], ["号双整", "UDInt"], ["", ""]];
document.getElementById("detail").innerHTML = detail.map(([name, type], i) =>
  `<tr class="${i ? "" : "sel"}"><td>${name}</td><td></td><td>${type}</td><td></td></tr>`).join("");

const rows = [
  ["布尔量", "Bool", "false"], ["字节", "Byte", "16#0"], ["短整", "SInt", "0"], ["无符号短整", "USInt", "0"],
  ["字", "Word", "16#0"], ["整形", "Int", "0"], ["无符号整形", "UInt", "0"], ["双字", "DWord", "16#0"],
  ["双整", "DInt", "0"], ["无符号双整", "UDInt", "0"], ["浮点数", "Real", "0.0"], ["双精度浮点数", "LReal", "0.0"],
  ["时间", "Time", "T#0ms"], ["日期", "Date", "D#1990-01-01"], ["日期/时间", "DTL", "DTL#1970-01-01-0", true],
  ["IEC定时器", "IEC_TIMER", "", true], ["IEC计数器", "IEC_COUNTER", "", true],
];
const labels = ["保持", "从 HMI/OPC UA 可访问", "从 HMI 可写", "在 HMI 中可见", "设定值"];
const checks = (n, off) => labels.map((label, i) =>
  `<td class="chk"><input type="checkbox" aria-label="${label} ${n}"${off ? " disabled" : i > 0 && i < 4 ? " checked" : ""}></td>`).join("");
const right = '<svg viewBox="0 0 6 8"><path d="M0 0v8l5-4z"/></svg>';
const down = '<svg viewBox="0 0 10 6"><path d="M0 0h10L5 6z"/></svg>';
const editor = `<td class="edit"><input type="text" value="0" aria-label="起始值"><span class="caret"></span>
  <button class="pick" aria-label="选择"><svg viewBox="0 0 10 11"><path d="M0 1.500h2M3 1.500h7M0 4.500h2M3 4.500h7M0 7.500h2M3 7.500h7M0 10h2M3 10h7" stroke="#223070"/></svg></button>
  <span class="glow"></span><svg class="beam" viewBox="0 0 8 16"><path d="M1 .5h2.500l.5.500.5-.5H7M4 1v14M1 15.500h2.500l.5-.5.5.500H7" fill="none" stroke="#111"/></svg></td>`;

let html = `<tr class="head"><td class="num">1</td><td>${use("tag")}</td><td><span class="name"><span class="tri down">${down}</span>Static</span></td><td></td><td></td>${checks(1, true)}<td></td><td></td><td></td></tr>`;
rows.forEach(([name, type, value, open], i) => {
  const n = i + 2;
  const start = n === 4 ? editor : `<td class="${value ? "" : "off"}">${value}</td>`;
  html += `<tr class="${n === 4 ? "cur" : ""}"><td>${n}</td><td>${use("tag")}</td><td><span class="name"><i class="dot"></i><span class="tri">${open ? right : ""}</span>${name}</span></td><td>${type}</td>${start}${checks(n)}<td></td><td></td><td></td></tr>`;
});
html += `<tr class="empty">${"<td></td>".repeat(13)}</tr>`.repeat(24);
document.getElementById("grid-body").innerHTML = html;
```
